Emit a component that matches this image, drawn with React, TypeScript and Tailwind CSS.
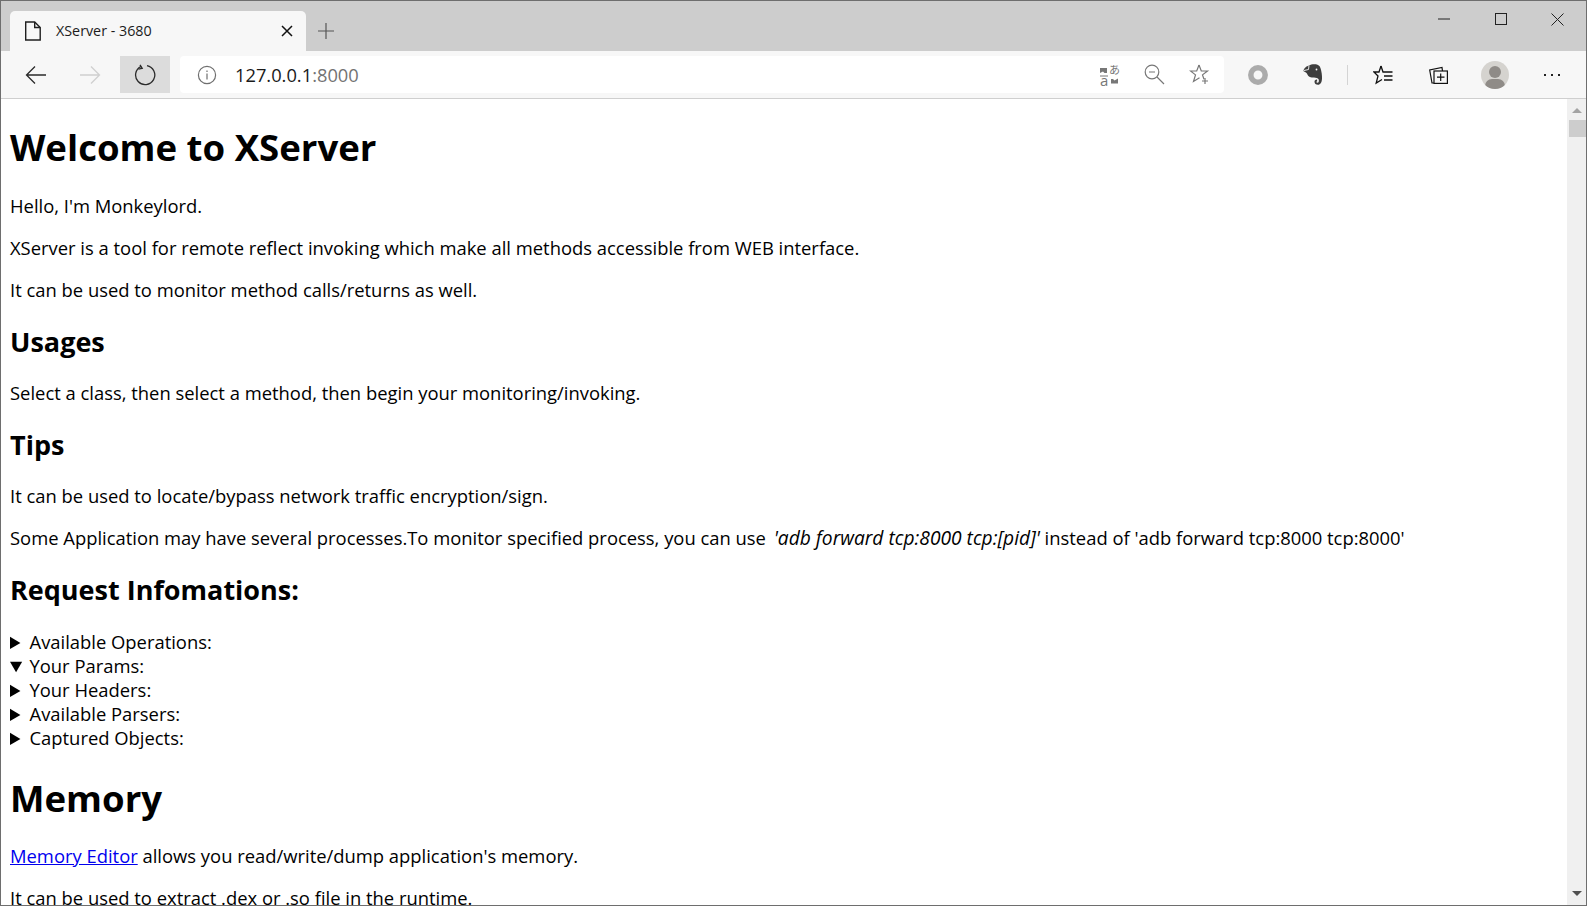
import React from 'react';

const TitleBar = () => (
  <div className="flex h-[50px] shrink-0 bg-[#cdcdcd]">
    <div className="ml-[9px] mt-[10px] flex h-[40px] w-[296px] items-center rounded-t-[5px] bg-[#f7f7f7] pl-[14px] pr-[13px]">
      <svg width="18" height="20" viewBox="0 0 18 20" fill="none" stroke="#1f1f1f" strokeWidth="1.4">
        <path d="M1.7 1h9l5.5 5.5V19H1.7z" />
        <path d="M10.7 1v5.5h5.5" />
      </svg>
      <span className="ml-[14px] mb-[1px] flex-1 text-[14.3px] text-[#1c1c1c] [font-family:'Open_Sans','Noto_Sans',sans-serif]">XServer - 3680</span>
      <svg width="12" height="12" viewBox="0 0 12 12" stroke="#111" strokeWidth="1.5">
        <path d="M1 1l10 10M11 1L1 11" />
      </svg>
    </div>
    <div className="ml-[12px] mt-[22px] h-[16px]">
      <svg width="16" height="16" viewBox="0 0 16 16" stroke="#555" strokeWidth="1.2">
        <path d="M8 0v16M0 8h16" />
      </svg>
    </div>
    <div className="ml-auto flex">
      <button className="flex h-[36px] w-[57px] items-center justify-center">
        <svg width="12" height="2" viewBox="0 0 12 2" stroke="#222" strokeWidth="1"><path d="M0 1h12" /></svg>
      </button>
      <button className="flex h-[36px] w-[57px] items-center justify-center">
        <svg width="12" height="12" viewBox="0 0 12 12" fill="none" stroke="#222" strokeWidth="1"><rect x="0.5" y="0.5" width="11" height="11" /></svg>
      </button>
      <button className="flex h-[36px] w-[57px] items-center justify-center">
        <svg width="13" height="13" viewBox="0 0 13 13" stroke="#222" strokeWidth="1"><path d="M0.5 0.5l12 12M12.5 0.5l-12 12" /></svg>
      </button>
    </div>
  </div>
);

// translate button: small text glyphs over two arrows
const TranslateIcon = () => (
  <div className="relative h-[20px] w-[20px] text-[#777]">
    <svg className="absolute inset-0" width="20" height="20" viewBox="0 0 20 20" fill="#777">
      <path d="M1 3h7v5H5.500L4 6.500 1 8z" />
      <path d="M19 18.500h-7v-4.500h2l1.500 1.500 3.500-2z" />
      <path d="M1 10.500h8v1H1z" />
    </svg>
    <span className="absolute left-[10px] top-[-3px] text-[11px] leading-[14px] [font-family:'Noto_Sans_CJK_JP',sans-serif]">あ</span>
    <span className="absolute left-[1px] top-[8px] text-[15px] leading-[14px] [font-family:'Open_Sans',sans-serif]">a</span>
  </div>
);

const Toolbar = () => (
  <div className="flex h-[48px] shrink-0 items-center border-b border-[#cfcfcf] bg-[#f7f7f7]">
    <div className="flex w-[59px] justify-center pl-[11px]">
      <svg width="22" height="20" viewBox="0 0 22 20" fill="none" stroke="#2b2b2b" strokeWidth="1.3"><path d="M21 10H1.500M10 1.500L1.500 10l8.500 8.500" /></svg>
    </div>
    <div className="flex w-[60px] justify-center">
      <svg width="22" height="20" viewBox="0 0 22 20" fill="none" stroke="#d0d0d0" strokeWidth="1.3"><path d="M1 10h19.500M12 1.500l8.500 8.500-8.500 8.500" /></svg>
    </div>
    <div className="flex h-[37px] w-[50px] items-center justify-center bg-[#dcdcdc]">
      <svg width="22" height="22" viewBox="0 0 22 22" fill="none" stroke="#2b2b2b" strokeWidth="1.3">
        <path d="M7.200 2.300A9.600 9.600 0 1 0 13 1.600" />
        <path d="M6 0.800l2.200 3.600-3.800 0.800" />
      </svg>
    </div>
    <div className="ml-[10px] flex h-[37px] w-[1044px] items-center rounded-[4px] bg-white pl-[17px] pr-[14px]">
      <svg width="20" height="20" viewBox="0 0 20 20" fill="none" stroke="#6f6f6f" strokeWidth="1.2">
        <circle cx="10" cy="10" r="8.600" />
        <path d="M10 8.500v6M10 5.500v1.600" />
      </svg>
      <span className="ml-[18px] flex-1 text-[18.3px] text-[#1a1a1a] [font-family:'Open_Sans','Noto_Sans',sans-serif]">
        127.0.0.1<span className="text-[#737373]">:8000</span>
      </span>
      <TranslateIcon />
      <svg className="ml-[25px]" width="21" height="21" viewBox="0 0 21 21" fill="none" stroke="#777" strokeWidth="1.2">
        <circle cx="8" cy="8" r="6.800" />
        <path d="M5 8h6M13 13l7 7" />
      </svg>
      <svg className="ml-[24px]" width="21" height="21" viewBox="0 0 21 21" fill="none" stroke="#777" strokeWidth="1.2">
        <path d="M10 1l2.300 6h6.200l-5 3.900 1.500 4.400M10 1L7.700 7H1.500l5 3.900L4.500 17.500l6-3.800" />
        <path d="M16 14v6M13 17h6" />
      </svg>
    </div>
    <div className="ml-[24px] flex items-center">
      <svg width="20" height="20" viewBox="0 0 20 20" fill="none" stroke="#ababab" strokeWidth="5.500"><circle cx="10" cy="10" r="7.200" /></svg>
      {/* evernote elephant */}
      <svg className="ml-[35px]" width="20" height="21" viewBox="0 0 20 21">
        <path
          fill="#3d3d3d"
          d="M6 1.500C8 0.300 12 0 14.500 0.800c2 .7 2.700 2 3.200 4 .8 3 1.500 6.500 1.300 10-.2 3.500-1.500 6-4 6-2.200 0-3.500-1.300-3.500-3 0-1.500 1.200-2.500 2.500-2.200l.2 1.600c-1-.2-1.200 1.500.3 1.600 1.400 0 1.700-2 1.100-3.500-.7-1.500-2.500-1.500-4.600-1.800-2 .2-3.500 0-5-1-1.300-1-1.700-2.500-2.500-3.500C2 8 1 7.500 0.500 7c0-1.500 1.500-3.500 3-4.500z"
        />
        <path d="M6 1.500L5.500 5.500 1 6.500" fill="none" stroke="#f7f7f7" strokeWidth="0.900" />
        <circle cx="13.500" cy="5.500" r="0.900" fill="#f7f7f7" />
      </svg>
      <div className="ml-[24px] h-[20px] w-[1px] bg-[#d4d4d4]" />
      <svg className="ml-[25px]" width="20" height="20" viewBox="0 0 20 20" fill="none" stroke="#111" strokeWidth="1.300">
        <path d="M8 1l2 6h9.500M8 1L6 7H1l4 4-1.800 7L9 14.500" />
        <path d="M11 11h8.500M11 15h8.500" />
      </svg>
      <svg className="ml-[36px]" width="19" height="19" viewBox="0 0 19 19" fill="none" stroke="#111" strokeWidth="1.200">
        <path d="M5 18H3L0.700 5 13 2.500l0.500 3.500" />
        <rect x="5" y="6" width="13.400" height="12.400" />
        <path d="M11.700 8.500v7.500M8 12.200h7.500" />
      </svg>
      <div className="relative ml-[33px] h-[28px] w-[28px] overflow-hidden rounded-full bg-[#d5d3cf]">
        <div className="absolute left-[8px] top-[5px] h-[12px] w-[12px] rounded-full bg-[#8f8b87]" />
        <div className="absolute left-[4px] top-[18px] h-[14px] w-[20px] rounded-full bg-[#8f8b87]" />
      </div>
      <div className="ml-[35px] flex gap-[5px]">
        <div className="h-[2px] w-[2px] bg-[#222]" />
        <div className="h-[2px] w-[2px] bg-[#222]" />
        <div className="h-[2px] w-[2px] bg-[#222]" />
      </div>
    </div>
  </div>
);

const Scrollbar = () => (
  <div className="flex w-[19px] shrink-0 flex-col items-center bg-[#f0f0f0]">
    <div className="flex h-[21px] w-full items-center justify-center pt-[2px]">
      <div className="h-0 w-0 border-x-[5px] border-b-[5px] border-x-transparent border-b-[#a3a3a3]" />
    </div>
    <div className="ml-[2px] h-[17px] w-[17px] bg-[#cdcdcd]" />
    <div className="mt-auto flex h-[19px] w-full items-center justify-center pb-[4px]">
      <div className="h-0 w-0 border-x-[5px] border-t-[5px] border-x-transparent border-t-[#505050]" />
    </div>
  </div>
);

const sections = ['Available Operations:', 'Your Params:', 'Your Headers:', 'Available Parsers:', 'Captured Objects:'];

const Content = () => (
  <div className="min-w-0 flex-1 overflow-hidden bg-white pl-[9px] text-[18.4px] leading-[24px] text-black [font-family:'Open_Sans','Noto_Sans',sans-serif]">
    <h1 className="mb-[23px] mt-[24px] text-[36.6px] font-bold leading-[48px]">Welcome to XServer</h1>
    <p className="mb-[18px]">Hello, I'm Monkeylord.</p>
    <p className="mb-[18px]">XServer is a tool for remote reflect invoking which make all methods accessible from WEB interface.</p>
    <p className="mb-[18px]">It can be used to monitor method calls/returns as well.</p>
    <h2 className="mb-[21px] mt-[22px] text-[27px] font-bold leading-[36px]">Usages</h2>
    <p className="mb-[18px]">Select a class, then select a method, then begin your monitoring/invoking.</p>
    <h2 className="mb-[21px] mt-[22px] text-[27px] font-bold leading-[36px]">Tips</h2>
    <p className="mb-[18px]">It can be used to locate/bypass network traffic encryption/sign.</p>
    <p className="mb-[18px]">
      Some Application may have several processes.To monitor specified process, you can use <i className="ml-[3px] text-[19.2px]">'adb forward tcp:8000 tcp:[pid]'</i> instead of 'adb forward tcp:8000 tcp:8000'
    </p>
    <h2 className="mb-[22px] mt-[22px] text-[27px] font-bold leading-[36px]">Request Infomations:</h2>
    {sections.map((s) => (
      <details key={s} open={s === 'Your Params:'}>
        <summary>{s}</summary>
      </details>
    ))}
    <h1 className="mb-[22px] mt-[24px] text-[36.6px] font-bold leading-[48px]">Memory</h1>
    <p className="mb-[18px]">
      <a className="text-[#0000ee] underline" href="#memory">Memory Editor</a> allows you read/write/dump application's memory.
    </p>
    <p className="mb-[18px]">It can be used to extract .dex or .so file in the runtime.</p>
  </div>
);

export default function App() {
  return (
    <div className="flex h-[906px] w-[1587px] flex-col overflow-hidden border border-[#6e6e6e]">
      <TitleBar />
      <Toolbar />
      <div className="flex min-h-0 flex-1">
        <Content />
        <Scrollbar />
      </div>
    </div>
  );
}
